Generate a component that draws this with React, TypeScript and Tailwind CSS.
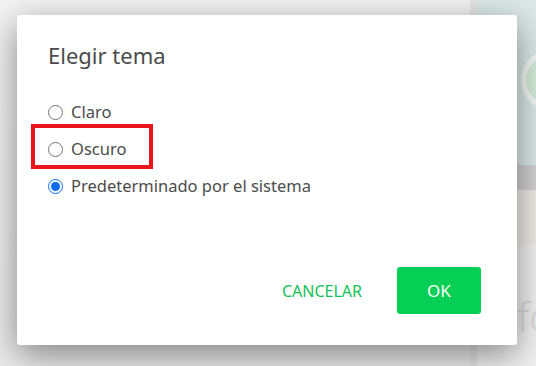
import { useState } from 'react';

const options = ['Claro', 'Oscuro', 'Predeterminado por el sistema'];

export default function App() {
  const [theme, setTheme] = useState(2);

  return (
    <div className="relative flex h-[366px] w-[536px] overflow-hidden bg-[#f0f0f0] font-['Noto_Sans',sans-serif]">
      {/* page behind the dialog */}
      <div className="flex-1 bg-gradient-to-b from-[#f3f3f3] to-[#ececec]" />
      <div className="w-[7px] bg-[#e6e6e6]" />
      <div className="flex w-[59px] flex-col">
        <div className="relative h-[165px] bg-[#dce9e8]">
          <div className="absolute left-[44px] top-[50px] h-[60px] w-[60px] rounded-full border-[5px] border-[#f4f8f6] bg-[#d6eedb]" />
        </div>
        <div className="h-[25px] bg-[#d2d2d2]" />
        <div className="h-[55px] bg-[#efece8]" />
        <div className="relative flex-1 bg-[#f2f2f2]">
          <span className="absolute left-[40px] top-[52px] text-[40px] font-light leading-none text-[#dcdcdc]">fo</span>
        </div>
      </div>

      {/* dialog */}
      <div className="absolute left-[17px] top-[15px] flex h-[330px] w-[500px] flex-col rounded-[3px] bg-white pl-[31px] pr-[36px] shadow-[0_10px_35px_rgba(0,0,0,0.45)]">
        <h2 className="mt-[25px] text-[22px] leading-[30px] text-[#4b4b4b]">Elegir tema</h2>
        <div className="mt-[24px] flex flex-col">
          {options.map((label, i) => (
            <label key={label} className="flex h-[37px] cursor-pointer items-center gap-[8px] text-[16.5px] text-[#4b4b4b]">
              <input
                type="radio"
                name="theme"
                checked={theme === i}
                onChange={() => setTheme(i)}
                className="m-0 h-[15px] w-[15px] accent-[#0a6cf5]"
              />
              {label}
            </label>
          ))}
        </div>
        <div className="mt-auto mb-[31px] flex items-center justify-end gap-[35px]">
          <button className="text-[16px] text-[#14c25a]">CANCELAR</button>
          <button className="h-[47px] w-[84px] rounded-[3px] bg-[#06cf55] text-[17px] text-white">OK</button>
        </div>
      </div>

      {/* annotation */}
      <div className="absolute left-[31px] top-[124px] h-[45px] w-[122px] border-[4px] border-[#e8141e]" />
    </div>
  );
}
